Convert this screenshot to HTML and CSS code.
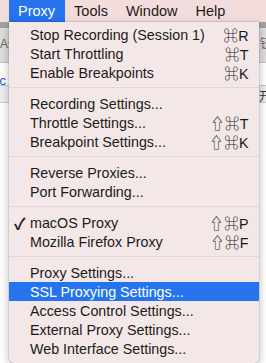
FILE: index.html
```html
<!DOCTYPE html>
<html lang="en">
<head>
    <meta charset="UTF-8">
    <title>Proxy Menu</title>
    <link rel="stylesheet" href="styles.css">
</head>
<body>
    <div class="menubar">
        <div class="menubar-item open">Proxy</div>
        <div class="menubar-item">Tools</div>
        <div class="menubar-item">Window</div>
        <div class="menubar-item">Help</div>
    </div>

    <!-- app window behind the menu -->
    <div class="window">
        <div class="toolbar"></div>
        <div class="tabs">
            <span class="tab-left">As</span>
            <span class="tab-right">钮</span>
        </div>
        <div class="address">
            <span class="addr-left">.c</span>
        </div>
        <div class="strip">
            <span class="strip-right">开</span>
        </div>
        <div class="content"></div>
    </div>

    <div class="menu">
        <div class="menu-item"><span class="label">Stop Recording (Session 1)</span><span class="keys">⌘R</span></div>
        <div class="menu-item"><span class="label">Start Throttling</span><span class="keys">⌘T</span></div>
        <div class="menu-item"><span class="label">Enable Breakpoints</span><span class="keys">⌘K</span></div>
        <div class="separator"></div>
        <div class="menu-item"><span class="label">Recording Settings...</span></div>
        <div class="menu-item"><span class="label">Throttle Settings...</span><span class="keys">⇧⌘T</span></div>
        <div class="menu-item"><span class="label">Breakpoint Settings...</span><span class="keys">⇧⌘K</span></div>
        <div class="separator"></div>
        <div class="menu-item"><span class="label">Reverse Proxies...</span></div>
        <div class="menu-item"><span class="label">Port Forwarding...</span></div>
        <div class="separator"></div>
        <div class="menu-item checked"><span class="check">✓</span><span class="label">macOS Proxy</span><span class="keys">⇧⌘P</span></div>
        <div class="menu-item"><span class="label">Mozilla Firefox Proxy</span><span class="keys">⇧⌘F</span></div>
        <div class="separator"></div>
        <div class="menu-item"><span class="label">Proxy Settings...</span></div>
        <div class="menu-item active"><span class="label">SSL Proxying Settings...</span></div>
        <div class="menu-item"><span class="label">Access Control Settings...</span></div>
        <div class="menu-item"><span class="label">External Proxy Settings...</span></div>
        <div class="menu-item"><span class="label">Web Interface Settings...</span></div>
    </div>
</body>
</html>
```

FILE: styles.css
```css
body {
    margin: 0;
    width: 266px;
    height: 363px;
    overflow: hidden;
    position: relative;
    font-family: 'Liberation Sans', Arial, 'Noto Sans CJK SC', sans-serif;
    font-size: 14.3px;
    color: #1c1a1a;
    background: #ffffff;
}

.menubar {
    display: flex;
    height: 22px;
    padding-left: 9px;
    background: #f3dddc;
}

.menubar-item {
    line-height: 22px;
    padding: 0 9px;
    font-size: 14.5px;
}

.menubar-item.open {
    background: #2574ee;
    color: #ffffff;
    padding-right: 10px;
}

.window {
    display: flex;
    flex-direction: column;
}

.toolbar {
    height: 6px;
    background: #a3a1a1;
}

.tabs {
    height: 34px;
    background: #dedcdc;
    display: flex;
    justify-content: space-between;
    align-items: flex-start;
    font-size: 12px;
    color: #6a6a6a;
    border-bottom: 1px solid #c4c4c4;
    overflow: hidden;
}

.tab-left {
    margin-top: 9px;
}

.tab-right {
    margin-top: 6px;
    margin-right: -6px;
}

.address {
    height: 22px;
    display: flex;
    align-items: center;
    font-size: 13px;
    color: #1d58c8;
    overflow: hidden;
}

.addr-left {
    margin-left: -4px;
    margin-top: 12px;
}

.strip {
    height: 16px;
    background: #ededed;
    border-top: 1px solid #c8c8c8;
    border-bottom: 1px solid #c8c8c8;
    display: flex;
    justify-content: flex-end;
    font-size: 12px;
    color: #333333;
    overflow: hidden;
}

.strip-right {
    margin-right: -5px;
    margin-top: 1px;
}

.content {
    flex: 1;
    background: #ffffff;
}

/* dropdown over the window */
.menu {
    position: absolute;
    left: 9px;
    top: 22px;
    width: 250px;
    padding: 3px 0 5px;
    background: #f3e8e7;
    border-radius: 0 0 5px 5px;
    box-shadow: 0 3px 10px rgba(0, 0, 0, 0.28), 0 0 0 0.5px rgba(0, 0, 0, 0.15);
}

.menu-item {
    display: flex;
    align-items: center;
    height: 19px;
    padding: 0 10px 0 21px;
    position: relative;
}

.menu-item .label {
    flex: 1;
}

.menu-item .keys {
    letter-spacing: 0.5px;
}

.menu-item.active {
    background: #2574ee;
    color: #ffffff;
}

.check {
    position: absolute;
    left: 5px;
    font-size: 16px;
    font-weight: bold;
}

.separator {
    height: 1px;
    margin: 5px 0 6px;
    background: #e0d6d5;
}
```
